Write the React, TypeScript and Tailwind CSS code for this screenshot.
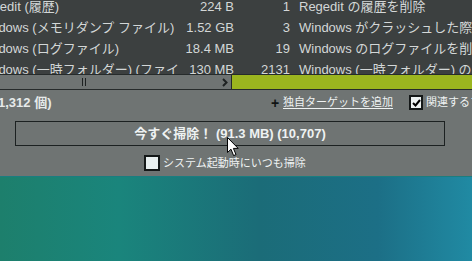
const rows = [
  { name: 'Regedit (履歴)', size: '224 B', count: '1', desc: 'Regedit の履歴を削除' },
  { name: 'Windows (メモリダンプ ファイル)', size: '1.52 GB', count: '3', desc: 'Windows がクラッシュした際に作成されたファイルを削除' },
  { name: 'Windows (ログファイル)', size: '18.4 MB', count: '19', desc: 'Windows のログファイルを削除' },
  { name: 'Windows (一時フォルダー) (ファイル)', size: '130 MB', count: '2131', desc: 'Windows (一時フォルダー) のファイルを削除' },
];

const font = { fontFamily: '"Liberation Sans", "Noto Sans CJK JP", sans-serif' };

function Cursor() {
  return (
    <svg className="absolute left-[227px] top-[137px]" width="13" height="20" viewBox="0 0 13 20">
      <path d="M0.5 0.5 L0.5 15.5 L4 12.2 L6.6 18.6 L9 17.6 L6.4 11.4 L11.2 11.4 Z" fill="#fff" stroke="#000" strokeWidth="1" strokeLinejoin="round" />
    </svg>
  );
}

export default function App() {
  return (
    <div className="relative w-[472px] h-[261px] overflow-hidden flex flex-col text-[#d3d7d7]" style={font}>
      <div className="h-[176px] bg-[#6f7473] flex flex-col shrink-0">
        {/* list */}
        <div className="h-[74px] bg-[#3c4040] overflow-hidden">
          <div className="-mt-[4px]">
            {rows.map((r) => (
              <div key={r.name} className="h-[21px] flex items-center text-[13px] whitespace-nowrap">
                <div className="w-[202px] -ml-[24px] overflow-hidden shrink-0">{r.name}</div>
                <div className="w-[56px] text-right shrink-0">{r.size}</div>
                <div className="w-[56px] text-right shrink-0">{r.count}</div>
                <div className="pl-[9px]">{r.desc}</div>
              </div>
            ))}
          </div>
        </div>

        {/* scrollbar */}
        <div className="h-[16px] border-y border-[#262b2b] flex shrink-0">
          <div className="w-[231px] bg-[#6f7473] relative flex items-center">
            <div className="ml-[82px] flex gap-[2px]">
              <div className="w-px h-[8px] bg-[#1e2222]" />
              <div className="w-px h-[8px] bg-[#1e2222]" />
            </div>
            <svg className="ml-auto mr-[3px]" width="6" height="9" viewBox="0 0 6 9">
              <path d="M1 1 L4.5 4.5 L1 8" fill="none" stroke="#1e2222" strokeWidth="2" />
            </svg>
          </div>
          <div className="w-px bg-[#262b2b]" />
          <div className="flex-1 bg-[#9bb51f]" />
        </div>

        {/* info row */}
        <div className="h-[25px] flex items-center text-[11px] whitespace-nowrap shrink-0">
          <div className="w-[273px] -ml-[2px] shrink-0 font-bold text-[13px] text-[#e6eaea]">1,312 個)</div>
          <div className="w-[12px] shrink-0 font-bold text-[14px] leading-none text-[#101414]">+</div>
          <div className="w-[126px] shrink-0 underline underline-offset-2 text-[#eef2f2]">独自ターゲットを追加</div>
          <div className="w-[14px] h-[15px] shrink-0 bg-[#eef3f3] border-2 border-[#141818] flex items-center justify-center">
            <svg width="9" height="8" viewBox="0 0 9 8">
              <path d="M1 4 L3.5 6.5 L8 1" fill="none" stroke="#000" strokeWidth="2" />
            </svg>
          </div>
          <div className="ml-[3px] text-[#eef2f2]">関連するファイル</div>
        </div>

        {/* clean button */}
        <div className="mt-[6px] ml-[15px] w-[430px] h-[25px] border border-[#1c2121] flex items-center justify-center text-[13px] font-bold text-[#eef2f2] whitespace-nowrap shrink-0">
          今すぐ掃除！ (91.3 MB) (10,707)
        </div>

        {/* startup option */}
        <div className="mt-[9px] h-[16px] flex items-center text-[11px] text-[#eef2f2] whitespace-nowrap shrink-0">
          <div className="ml-[144px] w-[16px] h-[16px] bg-[#e9f0f0] border-2 border-[#141818] shrink-0" />
          <div className="ml-[3px]">システム起動時にいつも掃除</div>
        </div>
      </div>

      {/* desktop */}
      <div className="flex-1 border-t border-[#1b7d80] bg-[linear-gradient(90deg,#1d7f6c_0%,#1a857c_25%,#1b6c78_55%,#1c6f86_80%,#208aa3_100%)]" />

      <Cursor />
    </div>
  );
}
